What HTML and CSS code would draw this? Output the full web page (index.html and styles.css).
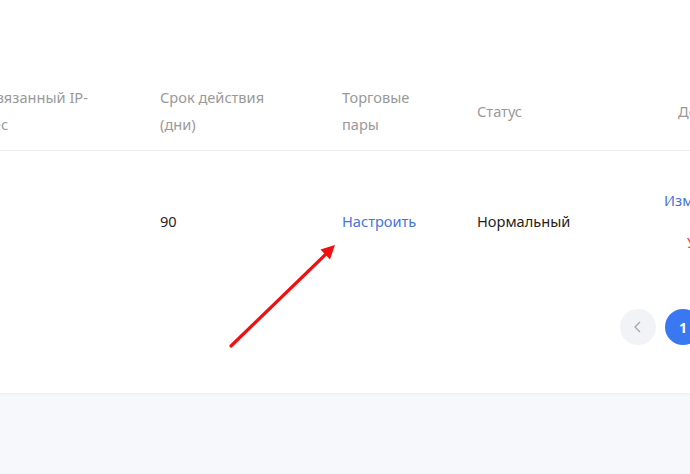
FILE: index.html
```html
<!DOCTYPE html>
<html lang="ru">
<head>
<meta charset="utf-8">
<title>API</title>
<link rel="stylesheet" href="styles.css">
</head>
<body>
<div class="card">
  <div class="scroller">
    <div class="inner">
      <table class="tbl">
        <colgroup>
          <col class="c-ip"><col class="c-term"><col class="c-pairs"><col class="c-status"><col class="c-act">
        </colgroup>
        <thead>
          <tr>
            <th><span class="th-label">Привязанный IP-адрес</span></th>
            <th><span class="th-label">Срок действия (дни)</span></th>
            <th><span class="th-label">Торговые пары</span></th>
            <th><span class="th-label">Статус</span></th>
            <th class="th-act"><span class="th-label">Действие</span></th>
          </tr>
        </thead>
        <tbody>
          <tr>
            <td></td>
            <td>90</td>
            <td><a class="link">Настроить</a></td>
            <td>Нормальный</td>
            <td>
              <div class="acts">
                <a class="link">Изменить</a>
                <a class="link danger">Удалить</a>
              </div>
            </td>
          </tr>
        </tbody>
      </table>
      <div class="pager">
        <span class="pg pg-nav">
          <svg width="14" height="14" viewBox="0 0 14 14"><path d="M9 2 L4 7 L9 12" fill="none" stroke="#a3a6ad" stroke-width="1.3"/></svg>
        </span>
        <span class="pg pg-cur">1</span>
        <span class="pg pg-nav">
          <svg width="14" height="14" viewBox="0 0 14 14"><path d="M5 2 L10 7 L5 12" fill="none" stroke="#a3a6ad" stroke-width="1.3"/></svg>
        </span>
      </div>
    </div>
  </div>
  <svg class="arrow" width="690" height="474" viewBox="0 0 690 474">
    <line x1="231" y1="346" x2="326" y2="254" stroke="#f01010" stroke-width="3.2" stroke-linecap="round"/>
    <polygon points="335,245 330,259.5 320.5,249.5" fill="#f01010"/>
  </svg>
</div>
</body>
</html>
```

FILE: styles.css
```css
html, body {
  margin: 0;
  padding: 0;
  height: 100%;
  overflow: hidden;
}
body {
  background: #f7f8fc;
  font-family: "Noto Sans", "Open Sans", sans-serif;
  font-size: 14.6px;
  color: #1f1f1f;
}
.card {
  position: relative;
  background: #fff;
  padding-top: 72px;
  padding-bottom: 48px;
  overflow: hidden;
  box-shadow: 0 1px 2px rgba(220, 225, 240, 0.6);
}
.scroller {
  overflow: hidden;
}
.inner {
  width: 837px;
  margin-left: -49px;
}
.tbl {
  width: 837px;
  border-collapse: collapse;
  table-layout: fixed;
}
.c-ip { width: 193px; }
.c-term { width: 182px; }
.c-pairs { width: 135px; }
.c-status { width: 187px; }
.c-act { width: 140px; }
.tbl th {
  text-align: left;
  font-weight: 400;
  color: #9a9a9a;
  line-height: 27px;
  padding: 12px 16px 12px 16px;
  border-bottom: 1px solid #eceef2;
  vertical-align: middle;
}
.th-label {
  display: block;
  max-width: 125px;
}
.tbl th.th-act {
  padding-left: 30px;
}
.tbl td {
  padding: 38px 16px;
  line-height: 22px;
  vertical-align: middle;
}
.link {
  color: #4674dc;
  cursor: pointer;
}
.acts {
  display: flex;
  flex-direction: column;
  gap: 20px;
}
.danger {
  color: #ee3b3b;
  padding-left: 23px;
}
.pager {
  display: flex;
  justify-content: flex-end;
  gap: 9px;
  margin-top: 18px;
  padding-right: 42px;
}
.pg {
  width: 36px;
  height: 36px;
  border-radius: 50%;
  display: flex;
  align-items: center;
  justify-content: center;
  font-weight: 700;
  font-size: 14px;
}
.pg-nav {
  background: #f2f3f7;
}
.pg-cur {
  background: #3a78f2;
  color: #fff;
}
.arrow {
  position: absolute;
  left: 0;
  top: 0;
  pointer-events: none;
}
```
